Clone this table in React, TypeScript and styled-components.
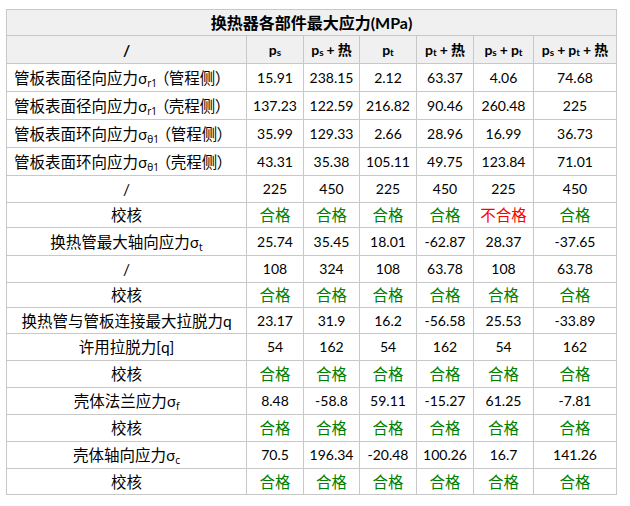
import React from "react";
import styled, { createGlobalStyle } from "styled-components";

const Global = createGlobalStyle`
  html, body { margin: 0; padding: 0; background: #ffffff; }
  body { font-family: Lato, "Noto Sans CJK SC", sans-serif; color: #000; }
`;

const Page = styled.div`
  padding: 9px 0 0 6px;
`;

const Grid = styled.div`
  display: grid;
  grid-template-columns: 239px 56px 55px 56px 56px 59px 82px;
  gap: 1px;
  padding: 1px;
  width: max-content;
  background: #c8c8c8;
`;

const Cell = styled.div<{ $h: number; $left?: boolean; $head?: boolean; $num?: boolean; $tone?: "ok" | "bad" }>`
  height: ${(p) => p.$h}px;
  display: flex;
  align-items: center;
  justify-content: ${(p) => (p.$left ? "flex-start" : "center")};
  padding-left: ${(p) => (p.$left ? "7px" : "0")};
  background: ${(p) => (p.$head ? "#f0f0f0" : "#ffffff")};
  font-weight: ${(p) => (p.$head ? 700 : 400)};
  font-size: ${(p) => (p.$num ? "14px" : "15.5px")};
  color: ${(p) => (p.$tone === "ok" ? "#008000" : p.$tone === "bad" ? "#ff0000" : "#000")};
  white-space: nowrap;
  overflow: hidden;
`;

const Text = styled.span`
  display: block;
  line-height: 20px;
`;

const Title = styled(Cell)`
  grid-column: 1 / -1;
  font-size: 16px;
`;

const Sub = styled.sub`
  font-family: "Noto Sans", "DejaVu Sans", sans-serif;
  font-size: 10px;
  vertical-align: -3px;
  line-height: 0;
  font-weight: inherit;
`;

const Sigma = styled.span`
  font-family: "Noto Sans", "DejaVu Sans", sans-serif;
  font-size: 15px;
`;

const Side = styled.span`
  font-family: "Noto Sans CJK SC", sans-serif;
  font-feature-settings: "palt";
  margin-left: 4px;
`;

const HeadSub = styled.sub`
  font-size: 10px;
  font-weight: 700;
  vertical-align: -1px;
  line-height: 0;
`;

const Plus = styled.span`
  margin: 0 3px;
`;

const P = ({ s }: { s: string }) => (
  <span>
    p<HeadSub>{s}</HeadSub>
  </span>
);

const S = ({ s }: { s: string }) => (
  <>
    <Sigma>σ</Sigma>
    <Sub>{s}</Sub>
  </>
);

type RowData = {
  label: React.ReactNode;
  left?: boolean;
  values: string[];
  h: number;
};

const rows: RowData[] = [
  { label: <>管板表面径向应力<S s="r1" /><Side>（管程侧）</Side></>, left: true, values: ["15.91", "238.15", "2.12", "63.37", "4.06", "74.68"], h: 27 },
  { label: <>管板表面径向应力<S s="r1" /><Side>（壳程侧）</Side></>, left: true, values: ["137.23", "122.59", "216.82", "90.46", "260.48", "225"], h: 27 },
  { label: <>管板表面环向应力<S s="θ1" /><Side>（管程侧）</Side></>, left: true, values: ["35.99", "129.33", "2.66", "28.96", "16.99", "36.73"], h: 27 },
  { label: <>管板表面环向应力<S s="θ1" /><Side>（壳程侧）</Side></>, left: true, values: ["43.31", "35.38", "105.11", "49.75", "123.84", "71.01"], h: 27 },
  { label: "/", values: ["225", "450", "225", "450", "225", "450"], h: 26 },
  { label: "校核", values: ["合格", "合格", "合格", "合格", "不合格", "合格"], h: 24 },
  { label: <>换热管最大轴向应力<S s="t" /></>, values: ["25.74", "35.45", "18.01", "-62.87", "28.37", "-37.65"], h: 27 },
  { label: "/", values: ["108", "324", "108", "63.78", "108", "63.78"], h: 26 },
  { label: "校核", values: ["合格", "合格", "合格", "合格", "合格", "合格"], h: 24 },
  { label: "换热管与管板连接最大拉脱力q", values: ["23.17", "31.9", "16.2", "-56.58", "25.53", "-33.89"], h: 25 },
  { label: "许用拉脱力[q]", values: ["54", "162", "54", "162", "54", "162"], h: 26 },
  { label: "校核", values: ["合格", "合格", "合格", "合格", "合格", "合格"], h: 26 },
  { label: <>壳体法兰应力<S s="f" /></>, values: ["8.48", "-58.8", "59.11", "-15.27", "61.25", "-7.81"], h: 26 },
  { label: "校核", values: ["合格", "合格", "合格", "合格", "合格", "合格"], h: 26 },
  { label: <>壳体轴向应力<S s="c" /></>, values: ["70.5", "196.34", "-20.48", "100.26", "16.7", "141.26"], h: 26 },
  { label: "校核", values: ["合格", "合格", "合格", "合格", "合格", "合格"], h: 25 },
];

const headers: React.ReactNode[] = [
  <P s="s" />,
  <>
    <P s="s" />
    <Plus>+</Plus>热
  </>,
  <P s="t" />,
  <>
    <P s="t" />
    <Plus>+</Plus>热
  </>,
  <>
    <P s="s" />
    <Plus>+</Plus>
    <P s="t" />
  </>,
  <>
    <P s="s" />
    <Plus>+</Plus>
    <P s="t" />
    <Plus>+</Plus>热
  </>,
];

export default function App() {
  return (
    <Page>
      <Global />
      <Grid>
        <Title $h={25} $head>
          <Text>换热器各部件最大应力(MPa)</Text>
        </Title>
        <Cell $h={27} $head>
          <Text>/</Text>
        </Cell>
        {headers.map((h, i) => (
          <Cell key={i} $h={27} $head $num>
            <Text>{h}</Text>
          </Cell>
        ))}
        {rows.map((r, ri) => (
          <React.Fragment key={ri}>
            <Cell $h={r.h} $left={r.left}>
              <Text>{r.label}</Text>
            </Cell>
            {r.values.map((v, vi) => {
              const tone = v === "合格" ? "ok" : v === "不合格" ? "bad" : undefined;
              return (
                <Cell key={vi} $h={r.h} $num={!tone} $tone={tone}>
                  <Text>{v}</Text>
                </Cell>
              );
            })}
          </React.Fragment>
        ))}
      </Grid>
    </Page>
  );
}
